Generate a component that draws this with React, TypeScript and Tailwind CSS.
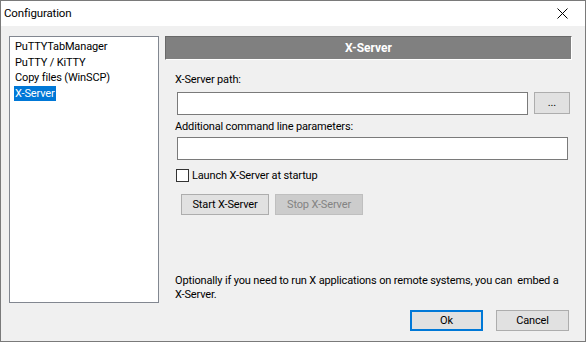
import React from "react";

const font = { fontFamily: 'Roboto, "Noto Sans", sans-serif' };

function WinButton({
  children,
  className = "",
  disabled = false,
}: {
  children: React.ReactNode;
  className?: string;
  disabled?: boolean;
}) {
  return (
    <button
      className={
        "flex items-center justify-center text-[11px] leading-none tracking-[-0.15px] " +
        (disabled
          ? "border border-[#bfbfbf] bg-[#cccccc] text-[#838383] "
          : "border border-[#adadad] bg-[#e1e1e1] text-black ") +
        className
      }
    >
      {children}
    </button>
  );
}

export default function App() {
  const items = ["PuTTYTabManager", "PuTTY / KiTTY", "Copy files (WinSCP)", "X-Server"];

  return (
    <div
      className="flex h-[342px] w-[586px] flex-col border border-[#7a7a7a] bg-[#f0f0f0] text-[11px] tracking-[-0.15px] text-black"
      style={font}
    >
      {/* title bar */}
      <div className="flex h-[25px] shrink-0 items-center justify-between bg-white pl-[3px] pr-[17px]">
        <span className="text-[11.5px]">Configuration</span>
        <svg width="11" height="11" viewBox="0 0 11 11">
          <path d="M0.5 0.5 L10.5 10.5 M10.5 0.5 L0.5 10.5" stroke="#000" strokeWidth="1" />
        </svg>
      </div>

      <div className="flex flex-1 flex-col px-[8px] pt-[10px]">
        <div className="flex h-[267px] gap-[6px]">
          {/* list */}
          <div className="flex w-[150px] flex-col border border-[#828790] bg-white px-[4px] pt-[2px] leading-[15.6px]">
            {items.map((it) => (
              <div key={it}>
                <span className={it === "X-Server" ? "bg-[#0078d7] px-[1px] py-[1px] text-white" : "px-[1px]"}>
                  {it}
                </span>
              </div>
            ))}
          </div>

          {/* panel */}
          <div className="flex w-[407px] flex-col">
            <div className="flex h-[24px] items-center justify-center border-t border-l border-t-[#696969] border-l-[#696969] border-r border-b border-r-white border-b-white bg-[#808080] text-[12px] font-bold tracking-normal text-white">
              X-Server
            </div>

            <div className="mt-[12px] pl-[10px] leading-[15px]">X-Server path:</div>
            <div className="mt-[5px] flex gap-[6px] pl-[12px]">
              <div className="h-[23px] w-[351px] border border-[#7a7a7a] bg-white" />
              <WinButton className="h-[22px] w-[36px] pb-[2px]">...</WinButton>
            </div>

            <div className="mt-[4px] pl-[10px] leading-[15px]">Additional command line parameters:</div>
            <div className="mt-[3px] pl-[12px]">
              <div className="h-[23px] w-[391px] border border-[#7a7a7a] bg-white" />
            </div>

            <div className="mt-[8px] flex items-center gap-[3px] pl-[11px]">
              <div className="h-[13px] w-[13px] border border-[#333333] bg-white" />
              <span className="leading-[15px]">Launch X-Server at startup</span>
            </div>

            <div className="mt-[11px] flex gap-[6px] pl-[16px]">
              <WinButton className="h-[21px] w-[88px]">Start X-Server</WinButton>
              <WinButton disabled className="h-[21px] w-[88px]">
                Stop X-Server
              </WinButton>
            </div>

            <div className="mt-auto pb-[1px] pl-[10px] leading-[14px]">
              Optionally if you need to run X applications on remote systems, you can&nbsp; embed a{" "}
              <span className="whitespace-nowrap">X-Server.</span>
            </div>
          </div>
        </div>

        {/* bottom buttons */}
        <div className="mt-[7px] flex justify-end gap-[13px] pr-[8px]">
          <WinButton className="h-[21px] w-[73px] !border-2 !border-[#0078d7]">Ok</WinButton>
          <WinButton className="h-[21px] w-[73px]">Cancel</WinButton>
        </div>
      </div>
    </div>
  );
}
